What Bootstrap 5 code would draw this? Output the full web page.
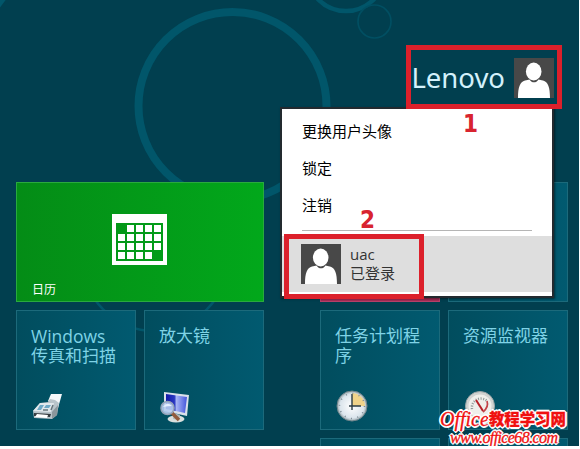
<!DOCTYPE html>
<html lang="zh-CN">
<head>
<meta charset="utf-8">
<title>开始</title>
<link href="https://cdn.jsdelivr.net/npm/bootstrap@5.3.0/dist/css/bootstrap.min.css" rel="stylesheet">
<style>
body{background:#fff;font-family:"Open Sans","Noto Sans CJK SC",sans-serif;overflow:hidden}
.start{width:579px;height:446px;background:#013f4f}
.rings{top:0;left:0}
.userbar{height:182px;padding:58px 25px 0 0}
.user-name{font-size:27.500px;line-height:40px;color:#d3f1fb;font-family:"Noto Sans","Open Sans",sans-serif;margin-right:9px}
.groups{padding-left:16px;gap:56px}
.tiles{display:grid;grid-template-columns:120px 120px;grid-auto-rows:120px;gap:8px}
.tile{border:1px solid #1c6a7b;background:linear-gradient(90deg,#014d5e,#015a70);color:#7fd3e6;font-size:17px;line-height:20px;padding:15px 12px 6px 14px}
.latin{font-size:17.5px}
.tile-wide{grid-column:span 2;background:linear-gradient(90deg,#048c16,#02a81b);border-color:#2aa93e;color:#fff;font-size:12px;line-height:14px;padding:30px 15px 4px}
.tile-red{background:#a52c56;border-color:#b64069}
.user-menu{left:280px;top:107px;width:274px;height:191px;background:#fff;border:2px solid #232a2f;box-shadow:1px 1px 2px rgba(0,0,0,.5);color:#000;font-size:15px}
.menu-line{height:37px;line-height:37px;padding-left:20px}
.rule{height:1px;background:#b5b5b5;margin:6px 20px 5px}
.session{height:56px;background:#dedede;padding-left:19px;gap:9px;color:#333;line-height:19px}
.frame{border:5px solid #dc202b}
.f1{left:406px;top:45px;width:156px;height:64px}
.f2{left:284px;top:234px;width:140px;height:65px}
.step{color:#d8242f;font:bold 24px/24px "DejaVu Sans",sans-serif;font-stretch:condensed}
.s1{left:463px;top:112px}
.s2{left:360px;top:208px}
.wm{left:440px;top:408px;width:130px;color:#f01010;font-family:"Liberation Serif","Noto Sans CJK SC",serif;font-style:italic;text-shadow:1px 0 #fff,-1px 0 #fff,0 1px #fff,0 -1px #fff,1px 1px #fff,-1px -1px #fff,1px -1px #fff,-1px 1px #fff,2px 0 #fff,-2px 0 #fff,0 2px #fff,0 -2px #fff}
.wm-top{font-size:20px;line-height:22px;-webkit-text-stroke:.3px #f01010}
.wm-cn{font-size:15.400px;font-weight:900;font-style:normal;vertical-align:1px}
.wm-url{font-size:16px;line-height:14px;padding-left:10px;letter-spacing:-.6px;-webkit-text-stroke:.3px #f01010}
</style>
<script src="https://cdn.jsdelivr.net/npm/bootstrap@5.3.0/dist/js/bootstrap.bundle.min.js"></script>
</head>
<body>
<svg class="position-absolute" width="0" height="0"><defs>
<symbol id="person" viewBox="0 0 40 40"><rect width="40" height="40" fill="#484848"/><path d="M4 40C4 29 6 24 11 22.500C13 22 14 21.700 15.500 21.500C18 25.300 22 25.300 24.500 21.500C26 21.700 27 22 29 22.500C34 24 36 29 36 40Z" fill="#fff"/><ellipse cx="19.700" cy="13.500" rx="7.800" ry="8.900" fill="#fff"/></symbol>
<linearGradient id="screen"><stop stop-color="#1218a8"/><stop offset=".4" stop-color="#2936c0"/><stop offset=".5" stop-color="#a5b2f4"/><stop offset="1" stop-color="#4355dc"/></linearGradient>
<radialGradient id="dial"><stop stop-color="#fff"/><stop offset=".8" stop-color="#dbe5ec"/><stop offset="1" stop-color="#9baab0"/></radialGradient>
</defs></svg>
<main class="start position-relative overflow-hidden">
  <svg class="rings position-absolute" width="579" height="446" fill="none" stroke="#01566a">
    <circle cx="232.500" cy="106" r="94" stroke-width="8"/>
    <circle cx="346" cy="-28" r="39" stroke-width="4.500"/>
    <circle cx="374.500" cy="21.500" r="16.500" stroke-width="1.700" stroke="#014f62"/>
    <circle cx="155" cy="258" r="73" stroke-width="2.500"/>
    <path d="M-2 6L4-2" stroke-width="5"/>
  </svg>
  <header class="userbar d-flex justify-content-end align-items-start position-relative">
    <span class="user-name">Lenovo</span>
    <svg width="40" height="40"><use href="#person"/></svg>
  </header>
  <div class="groups d-flex position-relative">
    <section class="tiles">
      <div class="tile tile-wide d-flex flex-column justify-content-between">
        <svg class="align-self-center" width="56" height="52" viewBox="0 0 56 52"><path fill="#fff" fill-rule="evenodd" d="M0 1H55V52H0ZM4 10V48H51V10Z"/><path fill="#fff" d="M15 12h7v7h-7zM24 12h7v7h-7zM33 12h7v7h-7zM42 12h7v7h-7zM6 21h7v7H6zM15 21h7v7h-7zM24 21h7v7h-7zM33 21h7v7h-7zM42 21h7v7h-7zM6 30h7v7H6zM15 30h7v7h-7zM24 30h7v7h-7zM33 30h7v7h-7zM42 30h7v7h-7zM6 39h7v7H6zM15 39h7v7h-7zM24 39h7v7h-7zM33 39h7v7h-7z"/></svg>
        <span>日历</span>
      </div>
      <div class="tile d-flex flex-column justify-content-between">
        <div><div class="latin">Windows</div><div>传真和扫描</div></div>
        <svg width="32" height="32" viewBox="0 0 32 32"><path d="M17 10L20 3L31 3L27 17Z" fill="#f5f8fa"/><path d="M2 20L9 12L17 11L19 8L24 9L28 12L26 24L21 28L3 27Z" fill="#b9c4ca"/><path d="M2 20L9 12L23 12L20 21Z" fill="#e2e8ec"/><path d="M9 14h4l-3 5H6zM15 14h5l-2 3h-5z" fill="#6fa9c6"/><path d="M12 19h5M22 14l-2 5" stroke="#66747b" stroke-width="1.500"/><path d="M3 22L20 23L19 26L3 25Z" fill="#343a3e"/><path d="M6 23L17 24L16 27L4 26Z" fill="#fff"/><path d="M21 21L27 14L26 24L21 28Z" fill="#8c979c"/></svg>
      </div>
      <div class="tile d-flex flex-column justify-content-between">
        <span>放大镜</span>
        <svg width="32" height="32" viewBox="0 0 32 32"><ellipse cx="17" cy="28" rx="8.500" ry="3.500" fill="#d8dfdd"/><path d="M15 22L21 24L20 29L14 28Z" fill="#b2babc"/><path d="M5 1L30 4L28 25L5 20Z" fill="#d9e0ea"/><path d="M7 3L28 6L26 22L7 18Z" fill="url(#screen)"/><path d="M13 22L20 29" stroke="#925c3d" stroke-width="3.500"/><circle cx="8.500" cy="17" r="6.500" fill="#b7cdf0" fill-opacity=".9" stroke="#95a3b8" stroke-width="1.500"/><path d="M4 16Q8 10 13 15Q9 15 4 16" fill="#e7f0ff"/></svg>
      </div>
    </section>
    <section class="tiles">
      <div class="tile tile-red"></div>
      <div class="tile"></div>
      <div class="tile d-flex flex-column justify-content-between">
        <span>任务计划程序</span>
        <svg width="34" height="34" viewBox="0 0 34 34"><circle cx="17" cy="17" r="15" fill="url(#dial)" stroke="#71858c"/><path d="M17 17V4A13 13 0 0 1 30 17Z" fill="#f0d38a"/><path d="M17 5V21M14 17H26" stroke="#2b3c45" stroke-width="1.400"/><circle cx="17" cy="17" r="12.500" fill="none" stroke="#7c8b94" stroke-width="1.500" stroke-dasharray="1 5.540"/></svg>
      </div>
      <div class="tile d-flex flex-column justify-content-between">
        <span>资源监视器</span>
        <svg width="34" height="34" viewBox="0 0 34 34"><circle cx="17" cy="17" r="14.500" fill="#d0d2d0" stroke="#9ba6a7"/><circle cx="17" cy="17" r="11.500" fill="#efefeb"/><path d="M9 20A9 9 0 0 1 24 12" fill="none" stroke="#8f9897" stroke-width="2.500" stroke-dasharray="1 1.500"/><path d="M13 11L20 22" stroke="#b62026" stroke-width="2"/><path d="M24 12Q26 18 20 23" fill="none" stroke="#c24247" stroke-width="1.700"/></svg>
      </div>
      <div class="tile"></div>
      <div class="tile"></div>
    </section>
  </div>

  <div class="user-menu position-absolute pt-1">
    <div class="menu-line">更换用户头像</div>
    <div class="menu-line">锁定</div>
    <div class="menu-line">注销</div>
    <div class="rule"></div>
    <div class="session d-flex align-items-center">
      <svg width="40" height="40"><use href="#person"/></svg>
      <div>uac<br>已登录</div>
    </div>
  </div>
  <div class="frame f1 position-absolute"></div>
  <div class="frame f2 position-absolute"></div>
  <span class="step s1 position-absolute">1</span>
  <span class="step s2 position-absolute">2</span>
  <div class="wm position-absolute text-nowrap">
    <div class="wm-top">Office<span class="wm-cn">教程学习网</span></div>
    <div class="wm-url">www.office68.com</div>
  </div>
</main>
</body>
</html>
